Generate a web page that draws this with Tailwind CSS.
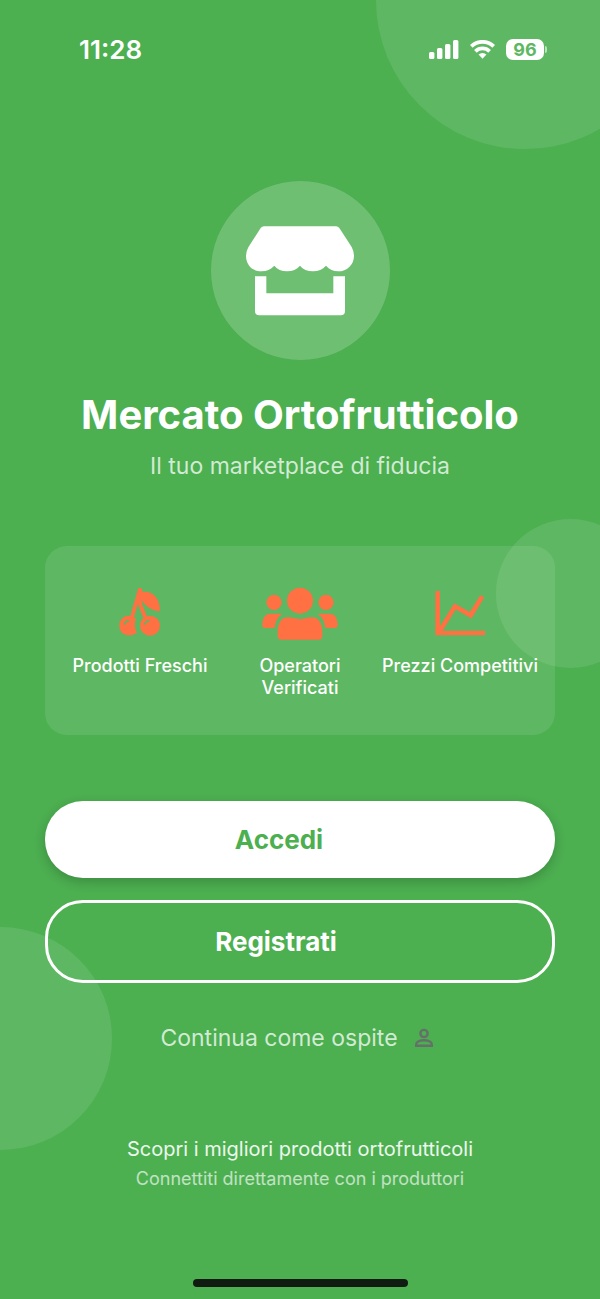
<!DOCTYPE html>
<html lang="it">
<head>
    <meta charset="UTF-8">
    <meta name="viewport" content="width=device-width, initial-scale=1.0">
    <title>Mercato Ortofrutticolo</title>
    <script src="https://cdn.jsdelivr.net/npm/@tailwindcss/browser@4"></script>
</head>
<body class="bg-[#4caf50] font-['Inter','Liberation_Sans',sans-serif] text-white">
    <div class="relative flex min-h-screen flex-col overflow-hidden">
        <!-- Background circles -->
        <div class="absolute -top-[149px] -right-[74px] size-[298px] rounded-full bg-white/10"></div>
        <div class="absolute top-[519px] -right-[45px] size-[149px] rounded-full bg-white/10"></div>
        <div class="absolute top-[927px] -left-[111px] size-[223px] rounded-full bg-white/10"></div>

        <!-- Status bar -->
        <header class="relative flex h-[98px] items-center justify-between pr-[53px] pl-[79px]">
            <time class="text-[26px] font-semibold">11:28</time>
            <div class="flex items-center gap-[11px]">
                <svg class="h-[19px] w-[30px]" viewBox="0 0 30 19" fill="currentColor" aria-hidden="true">
                    <rect x="0" y="12" width="5.4" height="7" rx="1.5"/>
                    <rect x="8" y="8" width="5.4" height="11" rx="1.5"/>
                    <rect x="16" y="4" width="5.4" height="15" rx="1.5"/>
                    <rect x="24" y="0" width="5.4" height="19" rx="1.5"/>
                </svg>
                <svg class="h-[19px] w-[25px]" viewBox="0 0 25 19" fill="none" stroke="currentColor" stroke-width="3.8" aria-hidden="true">
                    <path d="M1.3 6.4a16 16 0 0 1 22.4 0"/>
                    <path d="M5.4 11.3a10.2 10.2 0 0 1 14.2 0"/>
                    <path d="M12.5 18.8l-4-4.2a5.7 5.7 0 0 1 8 0z" fill="currentColor" stroke="none"/>
                </svg>
                <div class="flex items-center gap-px">
                    <span class="flex h-[21px] w-[38px] items-center justify-center rounded-[7px] bg-white text-[18px] leading-[21px] font-bold text-[#5eb762]">96</span>
                    <span class="h-[7px] w-[2px] rounded-r-full bg-white/60"></span>
                </div>
            </div>
        </header>

        <main class="relative flex flex-col items-center px-[45px] pt-[83px]">
            <!-- Logo -->
            <div class="flex size-[179px] items-center justify-center rounded-full bg-white/20">
                <svg class="h-[90px] w-[108px]" viewBox="138 168 324 268" fill="currentColor" aria-hidden="true">
                    <path d="M182 173Q186 168 192 168H408Q414 168 418 173L455 230Q462 243 462 256C462 284 440 303 415 303C400 303 388 298 378 286C368 297 355 303 339 303C322 303 309 297 300 286C290 297 278 303 261 303C245 303 232 297 223 286C212 298 200 303 185 303C157 303 138 284 138 256Q138 243 145 231Z"/>
                    <path d="M165 318H199V369H400V318H435V422Q435 435 422 435H178Q165 435 165 422Z"/>
                </svg>
            </div>

            <h1 class="mt-[29px] text-[40px] leading-[52px] font-bold whitespace-nowrap">Mercato Ortofrutticolo</h1>
            <p class="mt-[10px] text-[23px] leading-[30px] text-white/75">Il tuo marketplace di fiducia</p>

            <!-- Features -->
            <ul class="mt-[65px] grid w-full grid-cols-3 rounded-[22px] bg-white/10 px-[15px] pt-[37px] pb-[36px] text-center text-[18px] leading-[22px] font-medium">
                <li class="flex flex-col items-center gap-[14px]">
                    <svg class="h-[58px] w-[80px] text-[#ff7043]" viewBox="0 39 240 174" fill="none" stroke="currentColor" aria-hidden="true">
                        <path d="M119 62L97 138M116 80L122 108L138 148" stroke-width="12" stroke-linecap="round"/>
                        <path d="M113 54L125 55L128 66C150 63 180 76 180 124C155 122 130 108 119 78Z" fill="currentColor" stroke="none"/>
                        <path d="M86 137C94 137 99 139 108 145C103 160 104 178 111 188C103 194 95 196 87 196C70 196 58 184 58 168C58 150 69 137 86 137Z" fill="currentColor" stroke="none"/>
                        <circle cx="150" cy="167" r="30" fill="currentColor" stroke="none"/>
                        <path d="M73 162Q77 154 85 152M134 162Q138 154 146 152" stroke="#5eb762" stroke-width="5" stroke-linecap="round"/>
                    </svg>
                    <span class="whitespace-nowrap">Prodotti Freschi</span>
                </li>
                <li class="flex flex-col items-center gap-[14px]">
                    <svg class="h-[58px] w-[80px] text-[#ff7043]" viewBox="30 39 240 174" fill="currentColor" aria-hidden="true">
                        <circle cx="150" cy="92" r="39"/>
                        <circle cx="72" cy="97" r="23"/>
                        <circle cx="228" cy="97" r="23"/>
                        <path d="M113 142Q126 142 135 145Q150 150 165 145Q174 142 187 142C205 142 217 160 217 185V198Q217 209 206 209H94Q83 209 83 198V185C83 160 95 142 113 142Z"/>
                        <path d="M62 131H98C83 140 76 155 74 174H45Q37 174 37 166C37 144 45 131 62 131Z"/>
                        <path d="M238 131H202C217 140 224 155 226 174H255Q263 174 263 166C263 144 255 131 238 131Z"/>
                    </svg>
                    <span>Operatori Verificati</span>
                </li>
                <li class="flex flex-col items-center gap-[14px]">
                    <svg class="h-[58px] w-[80px] text-[#ff7043]" viewBox="0 39 240 174" fill="none" stroke="currentColor" stroke-width="14" aria-hidden="true">
                        <path d="M53 63V189H195"/>
                        <path d="M56 188L105 109L152 136L187 79"/>
                    </svg>
                    <span class="whitespace-nowrap">Prezzi Competitivi</span>
                </li>
            </ul>

            <!-- Actions -->
            <button type="button" class="mt-[66px] h-[77px] w-full rounded-[38px] bg-white pr-[42px] text-[26px] font-bold text-[#4caf50] shadow-[0_4px_12px_rgba(0,0,0,0.2)]">Accedi</button>
            <button type="button" class="mt-[22px] h-[83px] w-full rounded-[38px] border-3 border-white pr-[48px] text-[26px] font-bold">Registrati</button>
            <button type="button" class="mt-[37px] flex h-9 items-center gap-[14px] pr-1 text-[23px] text-white/75">
                Continua come ospite
                <svg class="size-6 text-[#66706a]" viewBox="0 0 24 24" fill="none" stroke="currentColor" stroke-width="2.4" aria-hidden="true">
                    <circle cx="12" cy="7.5" r="3.6"/>
                    <path d="M4.2 19.8V18.6C4.2 15.8 8 14.2 12 14.2S19.8 15.8 19.8 18.6V19.8Z"/>
                </svg>
            </button>
        </main>

        <!-- Footer -->
        <footer class="relative mt-[80px] flex flex-col items-center">
            <p class="text-[20px] leading-[26px] text-white/90">Scopri i migliori prodotti ortofrutticoli</p>
            <p class="mt-1 text-[18px] leading-[26px] text-white/65">Connettiti direttamente con i produttori</p>
        </footer>

        <div class="relative mx-auto mt-auto mb-[12px] h-[8px] w-[215px] rounded-full bg-[#101c11]"></div>
    </div>
</body>
</html>
